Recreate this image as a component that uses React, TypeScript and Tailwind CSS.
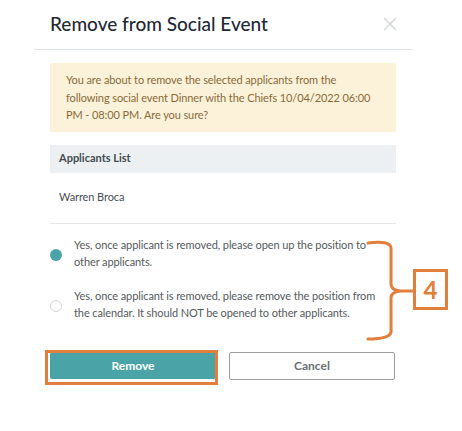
import React from "react";

const orange = "#e0803c";

const Radio: React.FC<{ checked?: boolean }> = ({ checked }) =>
  checked ? (
    <span className="mt-[13px] block h-[12px] w-[12px] shrink-0 rounded-full bg-[#4aa3a6]" />
  ) : (
    <span className="mt-[13px] block h-[12px] w-[12px] shrink-0 rounded-full border border-[#d4d7da] bg-white" />
  );

export default function App() {
  return (
    <div
      className="relative h-[431px] w-[462px] bg-white"
      style={{ fontFamily: "Lato, 'Liberation Sans', sans-serif" }}
    >
      <div className="ml-[34px] w-[378px]">
        {/* header */}
        <div className="flex h-[50px] items-center justify-between border-b border-[#dde3e8] pl-4 pr-[15px]">
          <h2 className="text-[19px] font-medium text-[#1f2a37]">Remove from Social Event</h2>
          <svg width="14" height="14" viewBox="0 0 14 14" className="mb-[2px]">
            <path d="M1 1L13 13M13 1L1 13" stroke="#cfd3d6" strokeWidth="1.3" />
          </svg>
        </div>

        <div className="px-4 pt-[13px]">
          <div className="rounded-[2px] bg-[#fcf2d9] px-4 py-[8px] text-[11px] leading-[17.5px] tracking-[-0.1px] text-[#8a6a3a]">
            You are about to remove the selected applicants from the following social event Dinner with the
            Chiefs 10/04/2022 06:00 PM - 08:00 PM. Are you sure?
          </div>

          <div className="mt-[13px] flex h-[28px] items-center bg-[#edf0f3] pl-[9px] text-[11px] font-bold text-[#444b52]">
            Applicants List
          </div>
          <div className="flex h-[51px] items-center border-b border-[#e4e7ea] pl-[9px] text-[11px] tracking-[-0.1px] text-[#4a4f55]">
            Warren Broca
          </div>

          <div className="flex flex-col gap-[17px] pt-[12px] text-[11px] leading-[17px] tracking-[-0.1px] text-[#555a60]">
            <label className="flex gap-[12px]">
              <Radio checked />
              <span className="pr-[20px]">
                Yes, once applicant is removed, please open up the position to other applicants.
              </span>
            </label>
            <label className="flex gap-[12px]">
              <Radio />
              <span className="pr-[20px]">
                Yes, once applicant is removed, please remove the position from the calendar. It should NOT be
                opened to other applicants.
              </span>
            </label>
          </div>

          <div className="mt-[31px] flex gap-[13px]">
            <div className="relative">
              <button className="h-[27px] w-[166px] rounded-[2px] bg-[#4aa3a6] text-[12px] font-bold text-white">
                Remove
              </button>
              <span
                className="pointer-events-none absolute left-[-5px] top-[-2px] h-[35px] w-[173px] border-[3px]"
                style={{ borderColor: orange }}
              />
            </div>
            <button className="h-[28px] w-[166px] rounded-[2px] border border-[#9a9da0] bg-white text-[12px] font-bold text-[#6b7075]">
              Cancel
            </button>
          </div>
        </div>
      </div>

      {/* annotation */}
      <svg className="absolute left-[360px] top-[236px]" width="60" height="110" viewBox="0 0 60 110">
        <path
          d="M8 7 Q 30 4 31 12 L 31 48 Q 31 54 40 55 Q 31 56 31 62 L 31 96 Q 30 103 8 103"
          fill="none"
          stroke={orange}
          strokeWidth="3"
          strokeLinecap="round"
        />
        <path d="M40 55 L 56 55" stroke={orange} strokeWidth="3" />
      </svg>
      <div
        className="absolute left-[413px] top-[269px] flex h-[41px] w-[35px] items-center justify-center border-[3px] bg-white text-[24px] font-bold"
        style={{ borderColor: orange, color: orange }}
      >
        4
      </div>
    </div>
  );
}
